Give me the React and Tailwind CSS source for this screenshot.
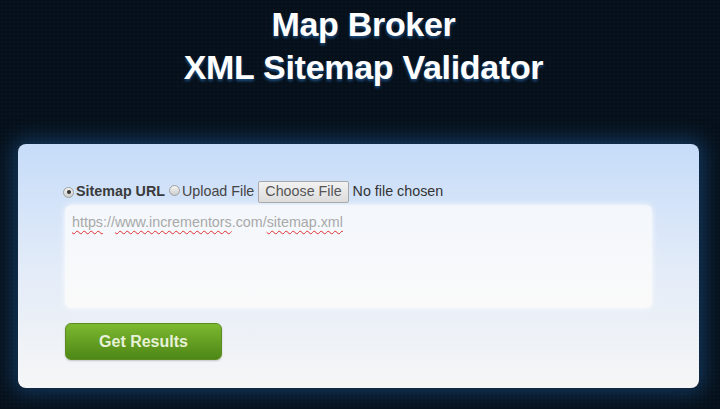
import React from 'react';

const font = { fontFamily: '"Liberation Sans", Arial, sans-serif' };

const Radio = ({ checked }) => (
  <span className="inline-flex items-center justify-center w-[11px] h-[11px] rounded-full border border-[#a0a0a0] bg-gradient-to-b from-[#f4f4f4] to-[#cdcdcd] shrink-0">
    {checked && <span className="w-[4px] h-[4px] rounded-full bg-[#333]" />}
  </span>
);

const Squiggle = ({ children }) => (
  <span className="underline decoration-wavy decoration-[#e03030] decoration-1 underline-offset-[3px]">{children}</span>
);

export default function App() {
  return (
    <div
      className="w-full h-[409px] overflow-hidden bg-[#06101a] bg-[radial-gradient(rgba(110,160,210,0.035)_1px,transparent_1px)] bg-[length:4px_4px]"
      style={font}
    >
      {/* Title */}
      <div className="pt-[3px] pl-[7px] text-center text-white font-bold text-[34px] leading-[43px] tracking-[-0.3px] [text-shadow:0_2px_3px_#1d4f82]">
        <div>Map Broker</div>
        <div>XML Sitemap Validator</div>
      </div>

      {/* Card */}
      <div className="mt-[55px] ml-[18px] w-[681px] h-[244px] rounded-[8px] bg-gradient-to-b from-[#c6dcf9] via-[#e2ebf8] to-[#f6f6f6] shadow-[0_0_20px_6px_rgba(30,90,150,0.5)] pt-[37px] pl-[45px]">
        <div className="flex items-center h-[22px] text-[14.3px] text-[#3a3a3a]">
          <Radio checked />
          <span className="font-bold ml-[2px]">Sitemap URL</span>
          <span className="ml-[4px]"><Radio /></span>
          <span className="ml-[2px] text-[#444]">Upload File</span>
          <span className="ml-[4px] h-[22px] px-[6px] flex items-center border border-[#a9a9a9] rounded-[2px] bg-gradient-to-b from-[#f2f2f2] to-[#dcdcdc] text-[#555]">
            Choose File
          </span>
          <span className="ml-[4px] text-[#333]">No file chosen</span>
        </div>

        <div className="mt-[2px] ml-[2px] w-[587px] h-[103px] rounded-[6px] bg-gradient-to-b from-[#f3f7fc] to-[#fafafa] shadow-[0_0_6px_rgba(255,255,255,0.9)] px-[7px] pt-[7px] text-[14.3px] text-[#a9a9a9]">
          <Squiggle>https</Squiggle>://<Squiggle>www.incrementors</Squiggle>.com/<Squiggle>sitemap.xml</Squiggle>
        </div>

        <button className="mt-[15px] ml-[2px] w-[157px] h-[37px] rounded-[6px] border border-[#5b8d22] bg-gradient-to-b from-[#7db930] to-[#4d8716] text-[16px] font-bold text-[#e8f1d8] shadow-[0_1px_2px_rgba(0,0,0,0.2)]">
          Get Results
        </button>
      </div>
    </div>
  );
}
